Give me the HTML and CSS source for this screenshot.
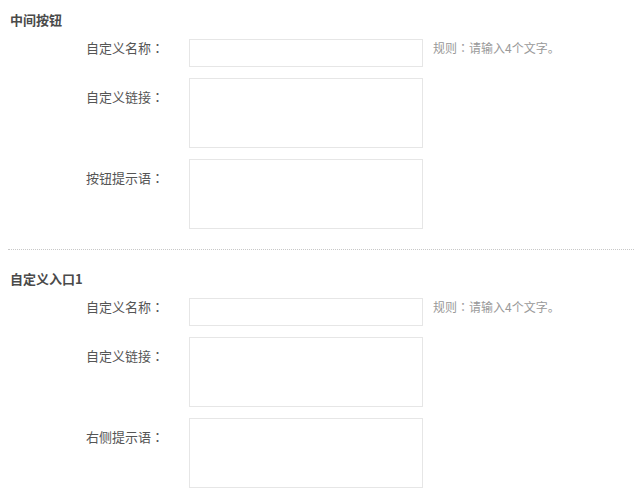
FILE: index.html
```html
<!DOCTYPE html>
<html lang="zh-CN">
<head>
<meta charset="utf-8">
<title>设置</title>
<link rel="stylesheet" href="styles.css">
</head>
<body>
<div class="wrap">
  <section class="block first">
    <h3 class="block-title">中间按钮</h3>
    <div class="row">
      <label class="label label-input">自定义名称<span class="colon" lang="ja">：</span></label>
      <input class="field" type="text">
      <span class="hint">规则<span class="colon" lang="ja">：</span>请输入4个文字。</span>
    </div>
    <div class="row">
      <label class="label label-area">自定义链接<span class="colon" lang="ja">：</span></label>
      <textarea class="area"></textarea>
    </div>
    <div class="row">
      <label class="label label-area">按钮提示语<span class="colon" lang="ja">：</span></label>
      <textarea class="area"></textarea>
    </div>
  </section>
  <section class="block second">
    <h3 class="block-title">自定义入口1</h3>
    <div class="row">
      <label class="label label-input">自定义名称<span class="colon" lang="ja">：</span></label>
      <input class="field" type="text">
      <span class="hint">规则<span class="colon" lang="ja">：</span>请输入4个文字。</span>
    </div>
    <div class="row">
      <label class="label label-area">自定义链接<span class="colon" lang="ja">：</span></label>
      <textarea class="area"></textarea>
    </div>
    <div class="row">
      <label class="label label-area">右侧提示语<span class="colon" lang="ja">：</span></label>
      <textarea class="area"></textarea>
    </div>
  </section>
</div>
</body>
</html>
```
FILE: styles.css
```css
html, body {
  margin: 0;
  padding: 0;
  background: #fff;
}
body {
  font-family: "Noto Sans CJK SC", "Noto Sans", "Liberation Sans", sans-serif;
  color: #555;
  font-size: 13px;
}
.wrap {
  width: 626px;
  padding-left: 8px;
}
.block {
  display: flex;
  flex-direction: column;
  gap: 11px;
}
.block.first {
  padding: 10px 0 20px;
  border-bottom: 1px dotted #c8c8c8;
}
.block.second {
  padding: 19px 0 10px;
}
.block-title {
  margin: 0 0 -2px;
  padding-left: 2px;
  font-size: 13px;
  font-weight: bold;
  line-height: 20px;
  color: #4a4a4a;
}
.row {
  display: flex;
  align-items: flex-start;
}
.label {
  width: 156px;
  margin-right: 25px;
  text-align: right;
  line-height: 18px;
  color: #555;
  flex: none;
}
.colon {
  font-family: "Noto Sans CJK JP", "Noto Sans CJK SC", sans-serif;
}
.label-input {
  padding-top: 0;
}
.label-area {
  padding-top: 10px;
}
.field, .area {
  box-sizing: border-box;
  width: 234px;
  border: 1px solid #e6e6e6;
  margin: 0;
  padding: 0 6px;
  background: #fff;
  font-family: inherit;
  outline: none;
  flex: none;
}
.field {
  height: 28px;
}
.area {
  height: 70px;
  resize: none;
}
.hint {
  margin-left: 10px;
  font-size: 12px;
  line-height: 18px;
  color: #999;
}
```
